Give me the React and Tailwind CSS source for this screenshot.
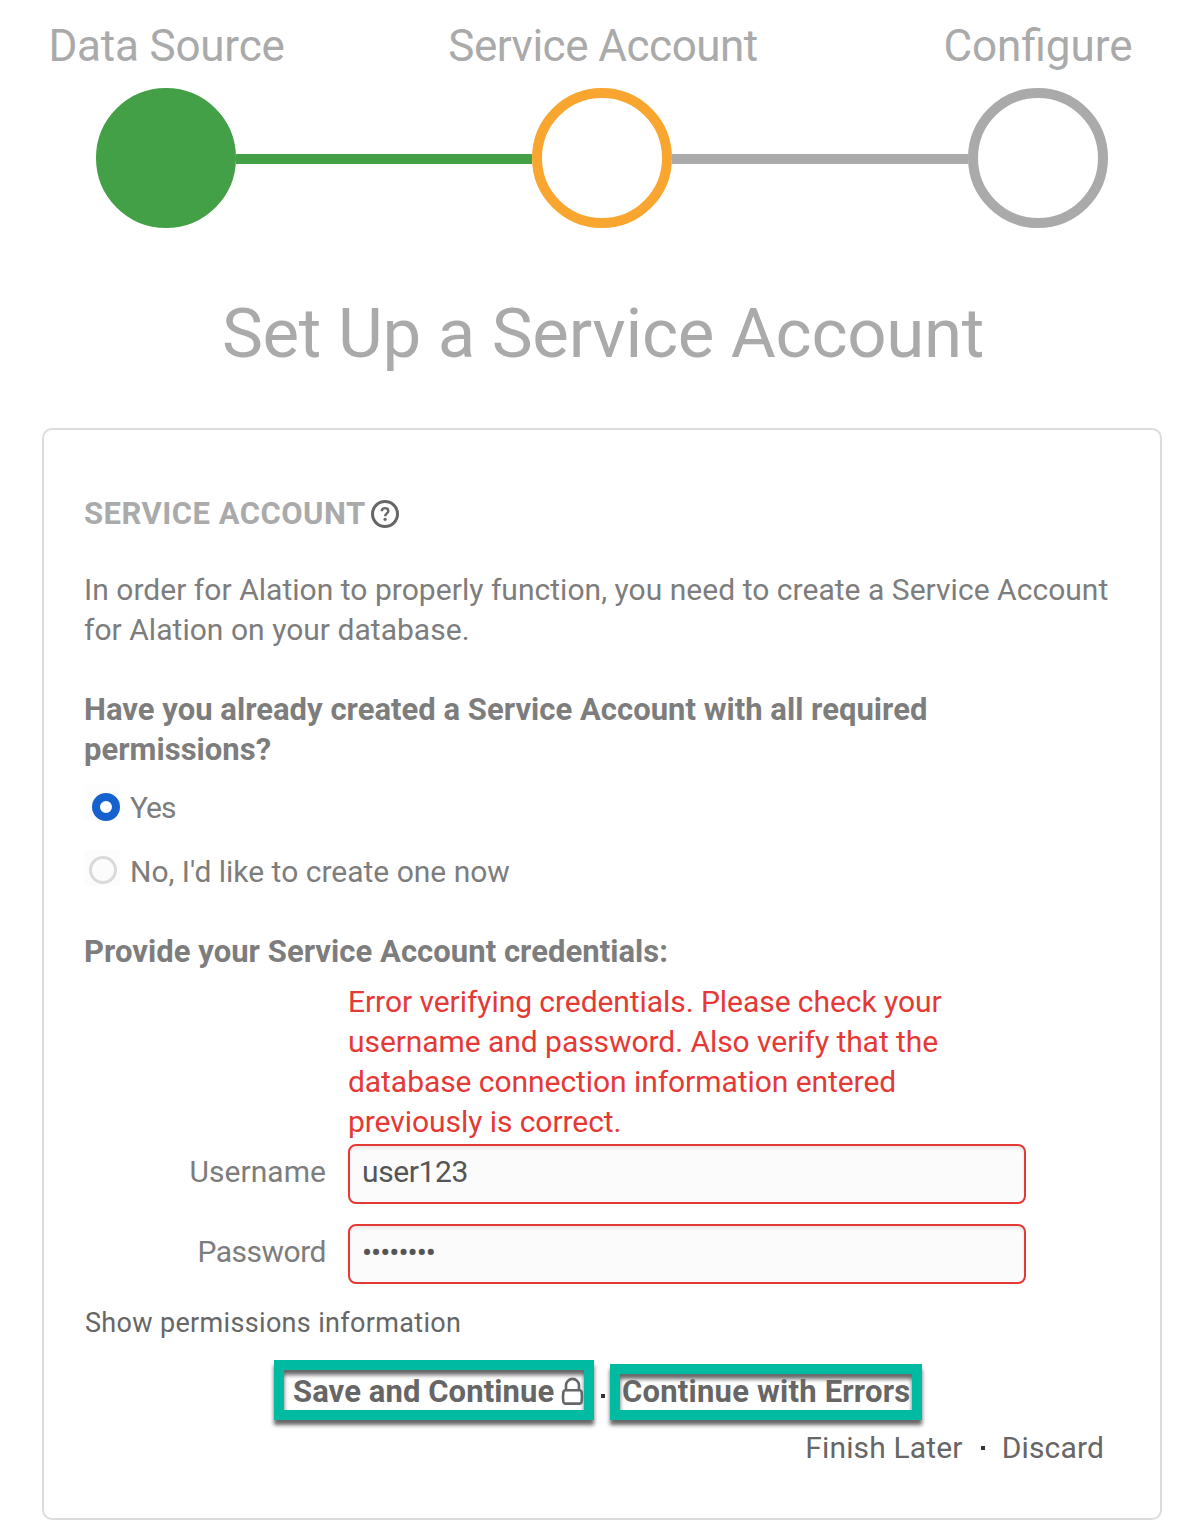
import React from 'react';

function Step({ label, labelClass, circleClass }) {
  return (
    <div className="flex w-[140px] flex-col items-center">
      <div className={`h-[60px] text-[44px] leading-[60px] whitespace-nowrap text-[#aaaaaa] ${labelClass}`}>{label}</div>
      <div className={`mt-3 h-[140px] w-[140px] shrink-0 rounded-full border-10 ${circleClass}`} />
    </div>
  );
}

function HelpIcon() {
  return (
    <svg className="mb-px ml-[5px] h-7 w-7" viewBox="0 0 28 28" fill="none" stroke="#666666">
      <circle cx="14" cy="14" r="12.5" strokeWidth="3" />
      <path d="M10.8 11.3c0-2 1.4-3.2 3.3-3.2s3.2 1.2 3.2 2.8c0 2.4-3.1 2.6-3.1 5.4" strokeWidth="2.4" />
      <circle cx="14.1" cy="19.3" r="1.6" fill="#666666" stroke="none" />
    </svg>
  );
}

function LockIcon() {
  return (
    <svg className="ml-[7px] h-[29px] w-[23px] shrink-0" viewBox="0 0 23 29" fill="none" stroke="#666666" strokeWidth="2.6">
      <path d="M5 13.2V8.4a6.5 6.5 0 0 1 13 0v4.8" />
      <path d="M4.2 13.2h14.6q1.4 0 1.8 1.6.8 4.8 0 10-.4 1.8-2 1.8H4.4q-1.6 0-2-1.8-.8-5.2 0-10 .4-1.6 1.8-1.6z" />
    </svg>
  );
}

function Field({ label, type, value, labelClass, inputClass }) {
  return (
    <label className="flex h-[60px]">
      <span className={`w-[264px] pr-[22px] pt-2 text-right ${labelClass}`}>{label}</span>
      <input
        type={type}
        defaultValue={value}
        className={`h-[60px] w-[678px] rounded-lg border-2 border-[#e53935] bg-[#fbfbfb] text-[#555555] shadow-[inset_0_3px_3px_#ececec] outline-none ${inputClass}`}
      />
    </label>
  );
}

export default function App() {
  return (
    <div className="h-[1540px] w-[1202px] overflow-hidden bg-white pt-4 font-['Roboto',sans-serif] text-[30px] leading-10 text-[#7d7d7d]">
      <header className="flex pr-[94px] pl-24">
        <Step label="Data Source" labelClass="pl-px tracking-[-0.2px]" circleClass="border-[#43a047] bg-[#43a047]" />
        <div className="mt-[138px] h-[10px] flex-1 bg-[#43a047]" />
        <Step label="Service Account" labelClass="pl-[2px] tracking-[-0.5px]" circleClass="border-[#f9a630]" />
        <div className="mt-[138px] h-[10px] flex-1 bg-[#aaaaaa]" />
        <Step label="Configure" labelClass="" circleClass="border-[#aaaaaa]" />
      </header>

      <h1 className="mt-[61px] h-[90px] pl-[4px] text-center text-[69px] leading-[90px] tracking-[-0.3px] text-[#aaaaaa]">
        Set Up a Service Account
      </h1>

      <main className="mt-[49px] ml-[42px] h-[1092px] w-[1120px] rounded-[10px] border-2 border-[#dcdcdc] pt-16 pl-10">
        <h2 className="flex h-10 items-center text-[31px] font-bold text-[#aaaaaa]">
          <span className="tracking-[0.48px]">SERVICE ACCOUNT</span>
          <HelpIcon />
        </h2>
        <p className="mt-9 w-[1040px] tracking-[0.03px]">
          In order for Alation to properly function, you need to create a Service Account for Alation on your database.
        </p>
        <p className="mt-10 w-[940px] text-[31px] font-bold tracking-[0.02px]">
          Have you already created a Service Account with all required permissions?
        </p>

        <label className="mt-[18px] flex h-10">
          <span className="mt-[-3px] flex h-9 w-9 items-end justify-end bg-[#fdfdfd]">
            <span className="h-7 w-7 rounded-full border-[8.5px] border-[#1562cf] bg-white" />
          </span>
          <span className="ml-[10px] tracking-[-1px]">Yes</span>
        </label>
        <label className="mt-6 flex h-10">
          <span className="mt-[-2px] flex h-9 w-9 bg-[#fcfcfc] pt-[6px] pl-[5px]">
            <span className="h-7 w-7 rounded-full border-[3px] border-[#dadada]" />
          </span>
          <span className="ml-[10px]">No, I'd like to create one now</span>
        </label>

        <p className="mt-10 text-[31px] font-bold tracking-[0.04px]">Provide your Service Account credentials:</p>
        <p className="mt-[10px] ml-[264px] w-[640px] tracking-[-0.06px] text-[#e53935]">
          Error verifying credentials. Please check your username and password. Also verify that the database connection
          information entered previously is correct.
        </p>
        <div className="mt-[2px] flex flex-col gap-5">
          <Field label="Username" type="text" value="user123" labelClass="tracking-[0.05px]" inputClass="pb-[6px] pl-[12px] tracking-[-0.4px]" />
          <Field label="Password" type="password" value="password" labelClass="tracking-[-0.5px]" inputClass="pb-[3px] pl-[12px] tracking-[-1px]" />
        </div>
        <p className="mt-[19px] pl-px text-[27px] tracking-[0.33px] text-[#666666]">Show permissions information</p>

        <div className="mt-[17px] ml-[190px] flex h-[60px] items-end text-[31px] font-bold text-[#666666]">
          <a className="flex h-[60px] w-[320px] items-center border-10 border-[#00bba2] pt-[3px] pl-[9px] shadow-[0_5px_4px_#666,inset_0_5px_4px_#666]">
            <span className="whitespace-nowrap tracking-[0.08px]">Save and Continue</span>
            <LockIcon />
          </a>
          <span className="mb-[22px] ml-[7px] h-1 w-1 bg-[#333333]" />
          <a className="ml-[5px] flex h-14 w-[312px] items-center border-10 border-[#00bba2] pb-px pl-[2px] shadow-[0_5px_4px_#666,inset_0_5px_4px_#666]">
            <span className="whitespace-nowrap tracking-[0.22px]">Continue with Errors</span>
          </a>
        </div>
        <div className="mt-2 flex h-10 items-center justify-end pr-[56px] text-[#666666]">
          <a className="tracking-[0.15px]">Finish Later</a>
          <span className="mr-[17px] ml-[18px] h-1 w-1 bg-[#333333]" />
          <a className="tracking-[0.15px]">Discard</a>
        </div>
      </main>
    </div>
  );
}
